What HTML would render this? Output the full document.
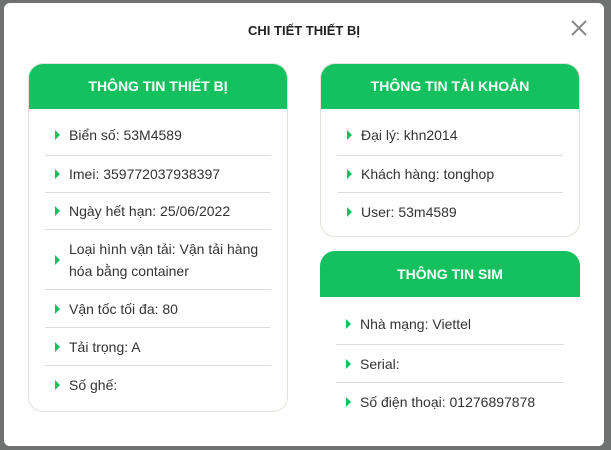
<!DOCTYPE html>
<html><head><meta charset="utf-8"><style>
*{margin:0;padding:0;box-sizing:border-box}
body{width:611px;height:450px;overflow:hidden;background:#6f7270;font-family:"Liberation Sans",sans-serif;position:relative}
.modal{position:absolute;left:4px;top:3px;width:600px;height:443px;background:#fff;border-radius:6px;overflow:hidden}
.title{position:absolute;top:20px;left:0;width:100%;text-align:center;font-weight:bold;font-size:13px;color:#222}
.close{position:absolute;left:567px;top:17px}
.card{position:absolute;width:260px;border:1px solid #e4e2da;border-radius:15px;overflow:hidden;background:#fff}
.hd{background:#14c15e;color:#fff;font-weight:bold;font-size:14px;text-align:center;height:45px;line-height:45px}
.row{position:relative;margin:0 16px;border-bottom:1px solid #dedede;font-size:14px;color:#333;padding:0 0 0 24px;display:flex;align-items:center;line-height:22px}
.row:last-child{border-bottom:none}
.row:before{content:"";position:absolute;left:10px;top:50%;margin-top:-5px;border-left:5px solid #14c15e;border-top:5px solid transparent;border-bottom:5px solid transparent}
.row.f:before{margin-top:-2px}
</style></head><body>
<div class="modal">
<div class="title">CHI TIẾT THIẾT BỊ</div>
<svg class="close" width="16" height="16" viewBox="0 0 16 16"><path d="M1 1L15 15M15 1L1 15" stroke="#888" stroke-width="2"/></svg>
<div class="card" style="left:24px;top:60px;height:349px">
<div class="hd">THÔNG TIN THIẾT BỊ</div>
<div class="row f" style="height:47px;padding-top:6px">Biển số: 53M4589</div>
<div class="row" style="height:37px">Imei: 359772037938397</div>
<div class="row" style="height:37px">Ngày hết hạn: 25/06/2022</div>
<div class="row" style="height:60px">Loại hình vận tải: Vận tải hàng hóa bằng container</div>
<div class="row" style="height:38px">Vận tốc tối đa: 80</div>
<div class="row" style="height:38px">Tải trọng: A</div>
<div class="row" style="height:38px">Số ghế:</div>
</div>
<div class="card" style="left:316px;top:60px;height:174px">
<div class="hd">THÔNG TIN TÀI KHOẢN</div>
<div class="row f" style="height:47px;padding-top:6px">Đại lý: khn2014</div>
<div class="row" style="height:37px">Khách hàng: tonghop</div>
<div class="row" style="height:37px">User: 53m4589</div>
</div>
<div class="card" style="left:316px;top:248px;height:200px;border:none">
<div class="hd" style="height:46px;line-height:46px">THÔNG TIN SIM</div>
<div class="row f" style="height:48px;padding-top:6px">Nhà mạng: Viettel</div>
<div class="row" style="height:38px">Serial:</div>
<div class="row" style="height:38px">Số điện thoại: 01276897878</div>
</div>
<div style="position:absolute;left:0;top:422px;width:600px;height:21px;background:#fff"></div>
</div>
</body></html>
